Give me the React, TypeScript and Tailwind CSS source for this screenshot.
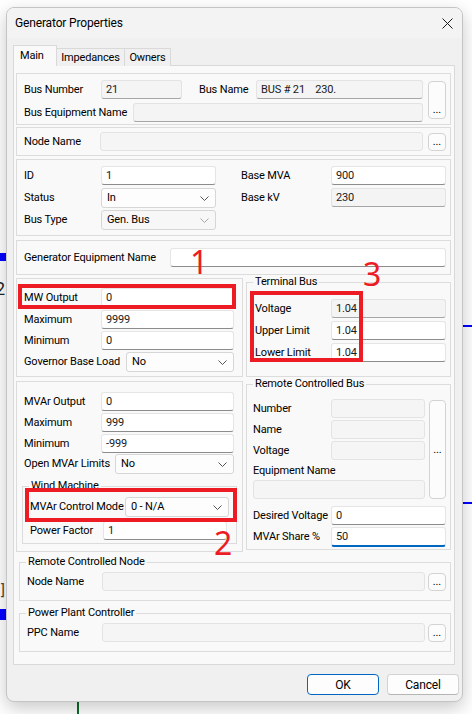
import type { ReactNode } from 'react';
import clsx from 'clsx';

// Windows 11 style property dialog, fixed 472x714 viewport

function Chevron({ dim }: { dim?: boolean }) {
  return (
    <svg width="9" height="5" viewBox="0 0 9 5" className="shrink-0">
      <polyline points="0.5,0.5 4.5,4.5 8.5,0.5" fill="none" stroke={dim ? '#a8a8a8' : '#555555'} strokeWidth="1" />
    </svg>
  );
}

function Field({ className, value, kind = 'edit' }: { className: string; value?: string; kind?: 'edit' | 'readonly' | 'off' | 'focus' }) {
  return (
    <div
      className={clsx(
        'flex shrink-0 items-center whitespace-pre rounded-[3px] border px-[4px] text-[#1a1a1a]',
        kind === 'edit' && 'h-[19px] border-[#e5e5e5] border-b-[#8c8c8c] bg-white',
        kind === 'readonly' && 'h-[19px] border-[#e3e3e3] border-b-[#a6a6a6] bg-[#f4f4f4]',
        kind === 'off' && 'h-[19px] border-[#e3e3e3] bg-[#f5f5f5]',
        kind === 'focus' && 'h-[20px] border-[#e5e5e5] border-b-2 border-b-[#0067c0] bg-white',
        className
      )}
    >
      {value}
    </div>
  );
}

function Select({ className, value, dim }: { className: string; value: string; dim?: boolean }) {
  return (
    <div
      className={clsx(
        'flex h-[20px] shrink-0 items-center justify-between rounded-[3px] border border-[#d6d6d6] pl-[5px] pr-[6px]',
        dim ? 'bg-[#f7f7f7]' : 'bg-[#fdfdfd]',
        className
      )}
    >
      <span className="whitespace-nowrap">{value}</span>
      <Chevron dim={dim} />
    </div>
  );
}

function Dots({ className }: { className: string }) {
  return (
    <div className={clsx('flex shrink-0 justify-center rounded-[4px] border border-[#d3d3d3] bg-[#fcfcfc] text-[11px] leading-none', className)}>
      ...
    </div>
  );
}

function Legend({ children, className }: { children: ReactNode; className: string }) {
  return <legend className={clsx('whitespace-nowrap px-[2px] leading-[16px]', className)}>{children}</legend>;
}

function Row({ label, lw, children, className }: { label: string; lw: string; children: ReactNode; className?: string }) {
  return (
    <div className={clsx('flex items-center', className)}>
      <span className={clsx('shrink-0 whitespace-nowrap', lw)}>{label}</span>
      {children}
    </div>
  );
}

export default function App() {
  return (
    <div className="relative h-[714px] w-[472px] overflow-hidden bg-white font-['Roboto','Noto_Sans',sans-serif] text-[11px] leading-[16px] tracking-[-0.15px] text-black">
      {/* canvas behind the dialog */}
      <div className="absolute left-0 top-[253px] h-[8px] w-[6px] bg-[#0000ff]" />
      <div className="absolute left-[-5px] top-[278px] text-[18px] leading-[22px] text-[#222]">2</div>
      <div className="absolute left-[1px] top-[581px] text-[15px] leading-[18px] text-[#5a4524]">]</div>
      <div className="absolute left-0 top-[609px] h-[11px] w-[6px] bg-[#0000ff]" />
      <div className="absolute left-[462px] top-[325px] h-[2px] w-[10px] bg-[#0000ff]" />
      <div className="absolute left-[462px] top-[502px] h-[2px] w-[10px] bg-[#0000ff]" />
      <div className="absolute left-[77px] top-[700px] h-[14px] w-[2px] bg-[#0a6b2a]" />

      <div className="relative z-10 pl-[6px] pt-[7px]">
        <div className="h-[695px] w-[457px] overflow-hidden rounded-[8px] border border-[#c4c4c4] bg-[#f0f0f0] shadow-[0_6px_18px_rgba(0,0,0,0.22)]">
          <div className="flex h-[30px] items-center justify-between bg-[#f3f3f3] pl-[8px] pr-[9px]">
            <span className="text-[12px]">Generator Properties</span>
            <svg width="11" height="11" viewBox="0 0 11 11">
              <path d="M0.5 0.5 L10.5 10.5 M10.5 0.5 L0.5 10.5" stroke="#1a1a1a" strokeWidth="1" />
            </svg>
          </div>

          <div className="px-[6px] pt-[7px]">
            <div className="flex h-[21px] items-end">
              <div className="relative z-10 h-[21px] w-[44px] border border-b-0 border-[#d9d9d9] bg-[#f9f9f9] pl-[6px] pt-[2px]">Main</div>
              <div className="h-[18px] w-[68px] border border-b-0 border-l-0 border-[#d9d9d9] bg-[#f0f0f0] pt-[1px] text-center">Impedances</div>
              <div className="h-[18px] w-[46px] border border-b-0 border-l-0 border-[#d9d9d9] bg-[#f0f0f0] pt-[1px] text-center">Owners</div>
            </div>

            <div className="-mt-px h-[600px] w-[442px] border border-[#d9d9d9] bg-[#f9f9f9] pl-[2px] pt-[7px]">
              {/* bus */}
              <div className="flex h-[52px] w-[435px] border border-[#dcdcdc] pl-[7px] pt-[6px]">
                <div className="flex flex-col">
                  <Row label="Bus Number" lw="w-[77px]">
                    <Field className="w-[81px]" value="21" kind="readonly" />
                    <span className="ml-[17px] w-[57px] whitespace-nowrap">Bus Name</span>
                    <Field className="w-[167px]" value="BUS # 21    230." kind="readonly" />
                  </Row>
                  <Row label="Bus Equipment Name" lw="w-[109px]" className="mt-[4px]">
                    <Field className="w-[290px]" kind="readonly" />
                  </Row>
                </div>
                <Dots className="ml-[5px] mt-[1px] h-[38px] w-[18px] items-end pb-[3px]" />
              </div>

              {/* node */}
              <div className="mt-[2px] flex h-[29px] w-[435px] items-center border border-[#dcdcdc] pl-[7px]">
                <span className="w-[76px] whitespace-nowrap">Node Name</span>
                <Field className="w-[323px]" kind="off" />
                <Dots className="ml-[5px] h-[18px] w-[18px] items-end pb-[3px]" />
              </div>

              {/* id / status */}
              <div className="mt-[3px] flex h-[77px] w-[435px] border border-[#dcdcdc] pl-[7px] pt-[6px]">
                <div className="flex w-[217px] flex-col">
                  <Row label="ID" lw="w-[77px]">
                    <Field className="w-[115px]" value="1" />
                  </Row>
                  <Row label="Status" lw="w-[77px]" className="mt-[3px]">
                    <Select className="w-[115px]" value="In" />
                  </Row>
                  <Row label="Bus Type" lw="w-[77px]" className="mt-[2px]">
                    <Select className="w-[115px]" value="Gen. Bus" dim />
                  </Row>
                </div>
                <div className="flex flex-col">
                  <Row label="Base MVA" lw="w-[90px]">
                    <Field className="w-[115px]" value="900" />
                  </Row>
                  <Row label="Base kV" lw="w-[90px]" className="mt-[3px]">
                    <Field className="w-[115px]" value="230" kind="readonly" />
                  </Row>
                </div>
              </div>

              {/* equipment name */}
              <div className="mt-[4px] flex h-[35px] w-[435px] items-center border border-[#dcdcdc] pl-[7px]">
                <span className="w-[146px] whitespace-nowrap">Generator Equipment Name</span>
                <Field className="w-[276px]" />
              </div>

              {/* MW + terminal bus */}
              <div className="-mt-px flex items-start gap-[3px]">
                <div className="mt-[4px] h-[99px] w-[227px] border border-[#dcdcdc] pl-[7px] pt-[9px]">
                  <Row label="MW Output" lw="w-[77px]">
                    <Field className="w-[133px]" value="0" />
                  </Row>
                  <Row label="Maximum" lw="w-[77px]" className="mt-[3px]">
                    <Field className="w-[133px]" value="9999" />
                  </Row>
                  <Row label="Minimum" lw="w-[77px]" className="mt-[2px]">
                    <Field className="w-[133px]" value="0" />
                  </Row>
                  <Row label="Governor Base Load" lw="w-[102px]" className="mt-[2px]">
                    <Select className="w-[108px]" value="No" />
                  </Row>
                </div>
                <fieldset className="m-0 h-[103px] w-[205px] border border-[#dcdcdc] p-0 pl-[8px]">
                  <Legend className="-ml-[2px]">Terminal Bus</Legend>
                  <div className="mt-[9px]">
                    <Row label="Voltage" lw="w-[76px]">
                      <Field className="w-[115px]" value="1.04" kind="readonly" />
                    </Row>
                    <Row label="Upper Limit" lw="w-[76px]" className="mt-[3px]">
                      <Field className="w-[115px]" value="1.04" />
                    </Row>
                    <Row label="Lower Limit" lw="w-[76px]" className="mt-[3px]">
                      <Field className="w-[115px]" value="1.04" />
                    </Row>
                  </div>
                </fieldset>
              </div>

              {/* MVAr + remote bus */}
              <div className="-mt-px flex items-start gap-[3px]">
                <div className="mt-[5px] h-[171px] w-[227px] border border-[#dcdcdc] pt-[10px]">
                  <div className="pl-[7px]">
                    <Row label="MVAr Output" lw="w-[77px]">
                      <Field className="w-[133px]" value="0" />
                    </Row>
                    <Row label="Maximum" lw="w-[77px]" className="mt-[2px]">
                      <Field className="w-[133px]" value="999" />
                    </Row>
                    <Row label="Minimum" lw="w-[77px]" className="mt-[2px]">
                      <Field className="w-[133px]" value="-999" />
                    </Row>
                    <Row label="Open MVAr Limits" lw="w-[91px]" className="mt-[1px]">
                      <Select className="w-[119px]" value="No" />
                    </Row>
                  </div>
                  <fieldset className="m-0 ml-[5px] mt-[4px] h-[66px] w-[215px] border border-[#dcdcdc] p-0 pl-[7px]">
                    <Legend className="-ml-[1px]">Wind Machine</Legend>
                    <Row label="MVAr Control Mode" lw="w-[95px]" className="mt-[3px]">
                      <Select className="w-[104px]" value="0 - N/A" />
                    </Row>
                    <Row label="Power Factor" lw="w-[73px]" className="mt-[4px]">
                      <Field className="w-[124px]" value="1" />
                    </Row>
                  </fieldset>
                </div>
                <fieldset className="m-0 h-[174px] w-[205px] border border-[#dcdcdc] p-0 pl-[6px]">
                  <Legend className="ml-0">Remote Controlled Bus</Legend>
                  <div className="mt-[7px] flex">
                    <div className="flex w-[172px] flex-col">
                      <Row label="Number" lw="w-[78px]">
                        <Field className="w-[94px]" kind="off" />
                      </Row>
                      <Row label="Name" lw="w-[78px]" className="mt-[2px]">
                        <Field className="w-[94px]" kind="off" />
                      </Row>
                      <Row label="Voltage" lw="w-[78px]" className="mt-[2px]">
                        <Field className="w-[94px]" kind="off" />
                      </Row>
                      <span className="mt-[2px] flex h-[18px] items-center whitespace-nowrap">Equipment Name</span>
                      <Field className="w-[172px]" kind="off" />
                    </div>
                    <Dots className="ml-[4px] mt-[1px] h-[99px] w-[17px] items-center" />
                  </div>
                  <Row label="Desired Voltage" lw="w-[78px]" className="mt-[7px]">
                    <Field className="w-[115px]" value="0" />
                  </Row>
                  <Row label="MVAr Share %" lw="w-[78px]" className="mt-[2px]">
                    <Field className="w-[115px]" value="50" kind="focus" />
                  </Row>
                </fieldset>
              </div>

              <fieldset className="m-0 ml-[3px] mt-[2px] h-[47px] w-[432px] border border-[#dcdcdc] p-0 pl-[7px]">
                <Legend className="-ml-px">Remote Controlled Node</Legend>
                <Row label="Node Name" lw="w-[75px]" className="mt-[2px]">
                  <Field className="w-[323px]" kind="off" />
                  <Dots className="ml-[3px] h-[18px] w-[18px] items-end pb-[3px]" />
                </Row>
              </fieldset>

              <fieldset className="m-0 ml-[3px] mt-[4px] h-[47px] w-[432px] border border-[#dcdcdc] p-0 pl-[7px]">
                <Legend className="-ml-px">Power Plant Controller</Legend>
                <Row label="PPC Name" lw="w-[75px]" className="mt-[2px]">
                  <Field className="w-[323px]" kind="off" />
                  <Dots className="ml-[3px] h-[18px] w-[18px] items-end pb-[3px]" />
                </Row>
              </fieldset>
            </div>

            <div className="mt-[9px] flex gap-[8px] pl-[294px] text-[12px]">
              <div className="flex h-[21px] w-[72px] shrink-0 items-center justify-center rounded-[4px] border border-[#0067c0] bg-[#fdfdfd]">OK</div>
              <div className="flex h-[21px] w-[72px] shrink-0 items-center justify-center rounded-[4px] border border-[#d3d3d3] border-b-[#b5b5b5] bg-[#fdfdfd]">Cancel</div>
            </div>
          </div>
        </div>
      </div>

      {/* red annotations */}
      <div className="pointer-events-none absolute left-[18px] top-[284px] z-20 h-[25px] w-[218px] border-4 border-[#ed1c24]" />
      <div className="pointer-events-none absolute left-[250px] top-[291px] z-20 h-[71px] w-[113px] border-4 border-[#ed1c24]" />
      <div className="pointer-events-none absolute left-[25px] top-[488px] z-20 h-[34px] w-[212px] border-4 border-[#ed1c24]" />
      <div className="absolute left-[190px] top-[244px] z-20 font-['Noto_Sans',sans-serif] text-[32px] leading-[36px] tracking-normal text-[#ed1c24]">1</div>
      <div className="absolute left-[363px] top-[256px] z-20 font-['Noto_Sans',sans-serif] text-[32px] leading-[36px] tracking-normal text-[#ed1c24]">3</div>
      <div className="absolute left-[214px] top-[525px] z-20 font-['Noto_Sans',sans-serif] text-[32px] leading-[36px] tracking-normal text-[#ed1c24]">2</div>
    </div>
  );
}
